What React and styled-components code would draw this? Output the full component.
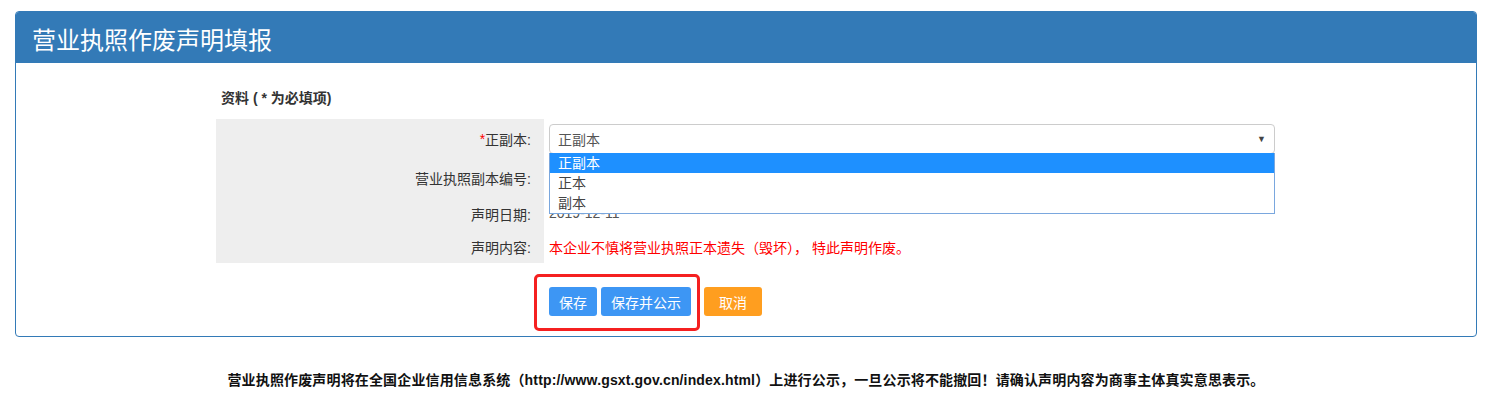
import React from 'react'
import styled, { createGlobalStyle } from 'styled-components'

const GlobalStyle = createGlobalStyle`
  body {
    margin: 0;
    background: #fff;
    font-family: 'Liberation Sans', 'Noto Sans CJK SC', sans-serif;
    font-size: 14px;
    color: #333;
  }
`

const Page = styled.div`
  padding: 11px 19px 0 15px;
`

const Panel = styled.div`
  border: 1px solid #337ab7;
  border-radius: 4px;
`

const PanelHeader = styled.div`
  background: #337ab7;
  color: #fff;
  height: 51px;
  padding: 2px 0 0 16px;
  display: flex;
  align-items: center;
  font-size: 24px;
  border-radius: 3px 3px 0 0;
  box-sizing: border-box;
`

const PanelBody = styled.div`
  padding: 26px 0 20px;
`

const FormArea = styled.div`
  width: 1060px;
  margin: 0 auto;
`

const SectionTitle = styled.div`
  font-weight: bold;
  padding-left: 5px;
  height: 30px;
  line-height: 18px;
`

const Table = styled.div`
  display: grid;
  grid-template-columns: 328px 1fr;
`

const Label = styled.div`
  background: #eee;
  height: ${(p) => p.h}px;
  display: flex;
  align-items: center;
  justify-content: flex-end;
  padding-right: 13px;
  color: #333;
`

const Star = styled.span`
  color: #f00;
`

const Value = styled.div`
  height: ${(p) => p.h}px;
  display: flex;
  align-items: center;
  padding-left: 5px;
  position: relative;
  color: ${(p) => (p.red ? '#f00' : '#555')};
`

const Select = styled.div`
  width: 726px;
  height: 30px;
  box-sizing: border-box;
  border: 1px solid #ccc;
  border-radius: 4px;
  display: flex;
  align-items: center;
  justify-content: space-between;
  padding: 0 8px;
  color: #555;
  background: #fff;
`

const Arrow = styled.span`
  font-size: 9px;
  color: #444;
`

const DropList = styled.div`
  position: absolute;
  left: 5px;
  top: 34px;
  width: 726px;
  box-sizing: border-box;
  border: 1px solid #7aa7de;
  border-top: none;
  background: #fff;
  z-index: 2;
`

const Option = styled.div`
  height: 20px;
  line-height: 21px;
  padding-left: 8px;
  color: ${(p) => (p.active ? '#fff' : '#444')};
  background: ${(p) => (p.active ? '#1e90ff' : '#fff')};
`

const DateText = styled.span`
  position: relative;
  top: -1px;
`

const Buttons = styled.div`
  position: relative;
  display: flex;
  gap: 4px;
  padding: 24px 0 0 333px;
`

const Btn = styled.button`
  height: 29px;
  padding: 0 ${(p) => (p.orange ? 15 : 10)}px;
  border: none;
  border-radius: 3px;
  background: ${(p) => (p.orange ? '#ff9e1f' : '#3d96f4')};
  color: #fff;
  font-family: inherit;
  font-size: 14px;
  margin-left: ${(p) => (p.orange ? '9px' : '0')};
`

const Highlight = styled.div`
  position: absolute;
  left: 318px;
  top: 11px;
  width: 166px;
  height: 57px;
  box-sizing: border-box;
  border: 3px solid #f52020;
  border-radius: 5px;
`

const Footer = styled.div`
  text-align: center;
  font-weight: bold;
  color: #111;
  padding-top: 32px;
  letter-spacing: 0.15px;
`

export default function App() {
  return (
    <>
      <GlobalStyle />
      <Page>
        <Panel>
          <PanelHeader>营业执照作废声明填报</PanelHeader>
          <PanelBody>
            <FormArea>
              <SectionTitle>资料 ( * 为必填项)</SectionTitle>
              <Table>
                <Label h={40}>
                  <Star>*</Star>正副本:
                </Label>
                <Value h={40}>
                  <Select>
                    <span>正副本</span>
                    <Arrow>▼</Arrow>
                  </Select>
                  <DropList>
                    <Option active>正副本</Option>
                    <Option>正本</Option>
                    <Option>副本</Option>
                  </DropList>
                </Value>
                <Label h={38}>营业执照副本编号:</Label>
                <Value h={38} />
                <Label h={34}>声明日期:</Label>
                <Value h={34}>
                  <DateText>2019-12-11</DateText>
                </Value>
                <Label h={32}>声明内容:</Label>
                <Value h={32} red>
                  本企业不慎将营业执照正本遗失（毁坏）， 特此声明作废。
                </Value>
              </Table>
              <Buttons>
                <Btn>保存</Btn>
                <Btn>保存并公示</Btn>
                <Btn orange>取消</Btn>
                <Highlight />
              </Buttons>
            </FormArea>
          </PanelBody>
        </Panel>
        <Footer>
          营业执照作废声明将在全国企业信用信息系统（http://www.gsxt.gov.cn/index.html）上进行公示，一旦公示将不能撤回！请确认声明内容为商事主体真实意思表示。
        </Footer>
      </Page>
    </>
  )
}
